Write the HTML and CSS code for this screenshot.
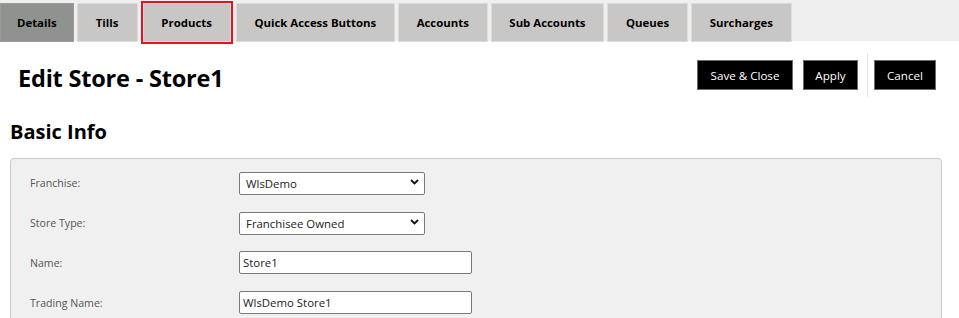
FILE: index.html
```html
<!DOCTYPE html>
<html lang="en">
<head>
    <meta charset="UTF-8">
    <title>Edit Store - Store1</title>
    <link rel="stylesheet" href="styles.css">
</head>
<body>
    <nav class="tabs">
        <a class="tab active" href="#">Details</a>
        <a class="tab" href="#">Tills</a>
        <a class="tab focused" href="#">Products</a>
        <a class="tab" href="#">Quick Access Buttons</a>
        <a class="tab" href="#">Accounts</a>
        <a class="tab" href="#">Sub Accounts</a>
        <a class="tab" href="#">Queues</a>
        <a class="tab" href="#">Surcharges</a>
    </nav>

    <div class="page-head">
        <h1>Edit Store - Store1</h1>
        <div class="actions">
            <button class="btn btn-save">Save &amp; Close</button>
            <button class="btn btn-apply">Apply</button>
            <span class="divider"></span>
            <button class="btn btn-cancel">Cancel</button>
        </div>
    </div>

    <h2>Basic Info</h2>
    <div class="panel">
        <div class="form-row">
            <label for="franchise">Franchise:</label>
            <span class="select-wrap">
                <select id="franchise">
                    <option>WlsDemo</option>
                </select>
                <svg class="chevron" width="9" height="6" viewBox="0 0 9 6"><path d="M1 1l3.5 3.5L8 1" fill="none" stroke="#111" stroke-width="1.8"/></svg>
            </span>
        </div>
        <div class="form-row">
            <label for="storeType">Store Type:</label>
            <span class="select-wrap">
                <select id="storeType">
                    <option>Franchisee Owned</option>
                </select>
                <svg class="chevron" width="9" height="6" viewBox="0 0 9 6"><path d="M1 1l3.5 3.5L8 1" fill="none" stroke="#111" stroke-width="1.8"/></svg>
            </span>
        </div>
        <div class="form-row">
            <label for="name">Name:</label>
            <input type="text" id="name" value="Store1">
        </div>
        <div class="form-row">
            <label for="tradingName">Trading Name:</label>
            <input type="text" id="tradingName" value="WlsDemo Store1">
        </div>
    </div>
</body>
</html>
```

FILE: styles.css
```css
body {
    margin: 0;
    background: #fff;
    font-family: 'Open Sans', 'Noto Sans', Arial, sans-serif;
    color: #000;
}
.tabs {
    display: flex;
    gap: 3px;
    height: 41px;
    padding-top: 3px;
    box-sizing: border-box;
    background: #efefef;
}
.tab {
    display: flex;
    align-items: center;
    justify-content: center;
    min-width: 61px;
    height: 39px;
    box-sizing: border-box;
    padding: 0 17.75px;
    border: 1px solid #dcdcdc;
    background: #c9c7c5;
    color: #000;
    font-size: 11.4px;
    font-weight: 700;
    text-decoration: none;
    white-space: nowrap;
}
.tab.active {
    padding: 0 16px;
    background: #8f928e;
    border-color: #9a9c99;
}
.tab.focused {
    margin: 0 2px;
    outline: 2px solid #e3141b;
    outline-offset: 0;
}
.page-head {
    display: flex;
    align-items: center;
    justify-content: space-between;
    height: 44px;
    margin-top: 12px;
    padding: 0 23px 0 18px;
}
h1 {
    margin: 5px 0 0;
    font-size: 23.5px;
    font-weight: 700;
    letter-spacing: -0.2px;
}
.actions {
    display: flex;
    align-items: center;
    height: 100%;
}
.btn {
    height: 30px;
    padding: 0;
    background: #000;
    color: #fff;
    border: 1px solid #6a6a6a;
    font-family: inherit;
    font-size: 11.6px;
    white-space: nowrap;
    cursor: pointer;
}
.btn-save { width: 96px; }
.btn-apply { width: 55px; margin-left: 10px; }
.btn-cancel { width: 62px; }
.divider {
    width: 1px;
    height: 100%;
    background: #e6e6e6;
    margin: 0 6px 0 9px;
}
h2 {
    margin: 22px 0 0 10px;
    font-size: 20px;
    font-weight: 700;
    line-height: 26px;
}
.panel {
    margin: 13px 17px 0 10px;
    padding: 12px 19px 20px;
    background: #f0f0f0;
    border: 1px solid #cacaca;
    border-radius: 4px;
    display: flex;
    flex-direction: column;
    gap: 17px;
}
.form-row {
    display: grid;
    grid-template-columns: 209px auto;
    align-items: center;
    height: 23px;
}
.form-row label {
    font-size: 10.6px;
    color: #555;
}
.select-wrap {
    position: relative;
    width: 186px;
}
select, input {
    height: 23px;
    box-sizing: border-box;
    border: 1px solid #7a7a7a;
    border-radius: 2px;
    background: #fff;
    font-family: inherit;
    font-size: 11.4px;
    color: #222;
}
select {
    width: 186px;
    padding: 0 20px 0 6px;
    appearance: none;
    -webkit-appearance: none;
}
.chevron {
    position: absolute;
    right: 6px;
    top: 8px;
    pointer-events: none;
}
input {
    width: 233px;
    padding: 0 3px;
}
```
